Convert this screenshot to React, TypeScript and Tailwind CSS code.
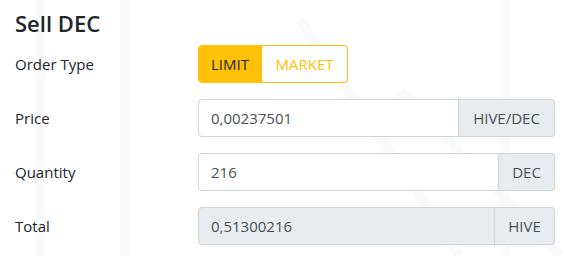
import { useState } from 'react'

const font = { fontFamily: '"Open Sans", "Noto Sans", sans-serif' }

function Row({ label, children }: { label: string; children: React.ReactNode }) {
  return (
    <div className="flex items-center h-[38px]">
      <div className="w-[183px] shrink-0 text-[15px] text-[#212529]">{label}</div>
      <div className="flex-1 min-w-0">{children}</div>
    </div>
  )
}

function Field({ value, unit, addonW, disabled }: { value: string; unit: string; addonW: string; disabled?: boolean }) {
  return (
    <div className="flex h-[38px] w-full text-[15px]">
      <div
        className={`flex-1 flex items-center px-3 border border-[#ced4da] rounded-l-[4px] text-[#495057] ${
          disabled ? 'bg-[#e9ecef]' : 'bg-white'
        }`}
      >
        {value}
      </div>
      <div
        className={`${addonW} shrink-0 flex items-center justify-center border border-l-0 border-[#ced4da] rounded-r-[4px] bg-[#e9ecef] text-[#495057]`}
      >
        {unit}
      </div>
    </div>
  )
}

export default function App() {
  const [type, setType] = useState<'LIMIT' | 'MARKET'>('LIMIT')

  return (
    <div className="relative w-[564px] h-[256px] bg-white overflow-hidden" style={font}>
      {/* faint watermark behind the form */}
      <svg className="absolute inset-0 pointer-events-none" width="564" height="256" fill="none" stroke="#fafafa" strokeWidth="10">
        <line x1="40" y1="0" x2="40" y2="256" />
        <line x1="125" y1="0" x2="125" y2="256" />
        <line x1="505" y1="0" x2="505" y2="256" />
        <line x1="400" y1="90" x2="560" y2="256" />
        <line x1="300" y1="20" x2="460" y2="256" />
      </svg>

      <div className="relative pl-[15px] pr-[9px] pt-[8px]">
        <h4 className="text-[22px] font-semibold text-[#212529] leading-[30px] mb-[7px]">Sell DEC</h4>

        <div className="flex flex-col gap-4">
          <Row label="Order Type">
            <div className="inline-flex h-[38px] text-[15px]">
              <button
                onClick={() => setType('LIMIT')}
                className={`w-[64px] rounded-l-[4px] border border-[#ffc107] ${
                  type === 'LIMIT' ? 'bg-[#ffc107] text-[#212529]' : 'bg-white text-[#ffc107]'
                }`}
              >
                LIMIT
              </button>
              <button
                onClick={() => setType('MARKET')}
                className={`w-[86px] rounded-r-[4px] border border-l-0 border-[#ffc107] ${
                  type === 'MARKET' ? 'bg-[#ffc107] text-[#212529]' : 'bg-white text-[#ffc107]'
                }`}
              >
                MARKET
              </button>
            </div>
          </Row>
          <Row label="Price">
            <Field value="0,00237501" unit="HIVE/DEC" addonW="w-[96px]" />
          </Row>
          <Row label="Quantity">
            <Field value="216" unit="DEC" addonW="w-[56px]" />
          </Row>
          <Row label="Total">
            <Field value="0,51300216" unit="HIVE" addonW="w-[60px]" disabled />
          </Row>
        </div>
      </div>
    </div>
  )
}
